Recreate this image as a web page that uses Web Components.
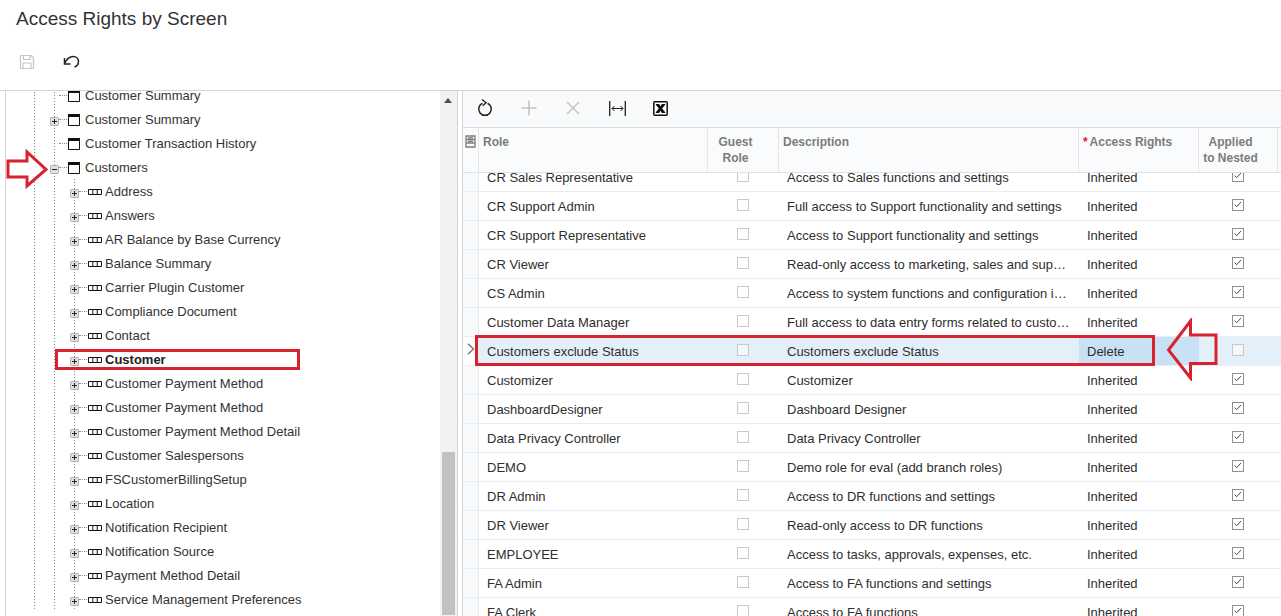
<!DOCTYPE html>
<html>
<head>
<meta charset="utf-8">
<title>Access Rights by Screen</title>
<style>
  html, body { margin: 0; height: 616px; overflow: hidden; background: #fff; }
  body { font-family: "Liberation Sans", Arial, sans-serif; color: #333; }
</style>
</head>
<body>
<access-page>
  <screen-tree slot="tree">
    <tree-node class="first" kind="screen">Customer Summary</tree-node>
    <tree-node kind="screen" toggle="plus">Customer Summary</tree-node>
    <tree-node kind="screen">Customer Transaction History</tree-node>
    <tree-node kind="screen" toggle="minus">Customers</tree-node>
    <tree-node kind="view" toggle="plus">Address</tree-node>
    <tree-node kind="view" toggle="plus">Answers</tree-node>
    <tree-node kind="view" toggle="plus">AR Balance by Base Currency</tree-node>
    <tree-node kind="view" toggle="plus">Balance Summary</tree-node>
    <tree-node kind="view" toggle="plus">Carrier Plugin Customer</tree-node>
    <tree-node kind="view" toggle="plus">Compliance Document</tree-node>
    <tree-node kind="view" toggle="plus">Contact</tree-node>
    <tree-node kind="view" toggle="plus" active>Customer</tree-node>
    <tree-node kind="view" toggle="plus">Customer Payment Method</tree-node>
    <tree-node kind="view" toggle="plus">Customer Payment Method</tree-node>
    <tree-node kind="view" toggle="plus">Customer Payment Method Detail</tree-node>
    <tree-node kind="view" toggle="plus">Customer Salespersons</tree-node>
    <tree-node kind="view" toggle="plus">FSCustomerBillingSetup</tree-node>
    <tree-node kind="view" toggle="plus">Location</tree-node>
    <tree-node kind="view" toggle="plus">Notification Recipient</tree-node>
    <tree-node kind="view" toggle="plus">Notification Source</tree-node>
    <tree-node kind="view" toggle="plus">Payment Method Detail</tree-node>
    <tree-node kind="view" toggle="plus">Service Management Preferences</tree-node>
  </screen-tree>
  <roles-grid slot="grid">
    <grid-row class="first" desc="Access to Sales functions and settings">CR Sales Representative</grid-row>
    <grid-row desc="Full access to Support functionality and settings">CR Support Admin</grid-row>
    <grid-row desc="Access to Support functionality and settings">CR Support Representative</grid-row>
    <grid-row desc="Read-only access to marketing, sales and support functions">CR Viewer</grid-row>
    <grid-row desc="Access to system functions and configuration in the CRM module">CS Admin</grid-row>
    <grid-row desc="Full access to data entry forms related to customer data">Customer Data Manager</grid-row>
    <grid-row selected rights="Delete" desc="Customers exclude Status">Customers exclude Status</grid-row>
    <grid-row desc="Customizer">Customizer</grid-row>
    <grid-row desc="Dashboard Designer">DashboardDesigner</grid-row>
    <grid-row desc="Data Privacy Controller">Data Privacy Controller</grid-row>
    <grid-row desc="Demo role for eval (add branch roles)">DEMO</grid-row>
    <grid-row desc="Access to DR functions and settings">DR Admin</grid-row>
    <grid-row desc="Read-only access to DR functions">DR Viewer</grid-row>
    <grid-row desc="Access to tasks, approvals, expenses, etc.">EMPLOYEE</grid-row>
    <grid-row desc="Access to FA functions and settings">FA Admin</grid-row>
    <grid-row desc="Access to FA functions">FA Clerk</grid-row>
  </roles-grid>
</access-page>

<script>
const RED = '#d9222f';

class AccessPage extends HTMLElement {
  constructor() {
    super();
    this.attachShadow({mode: 'open'}).innerHTML = `
      <style>
        :host { display: flex; flex-direction: column; height: 616px; position: relative; overflow: hidden; }
        h1 { margin: 0; padding: 8px 0 0 16px; height: 29px; font: 400 19px/21px "Liberation Sans", Arial, sans-serif; color: #333; }
        .bar { display: flex; align-items: center; height: 54px; box-sizing: border-box; padding: 0 0 4px 19px; gap: 27px; border-bottom: 1px solid #d4d4d4; }
        .bar svg { display: block; }
        main { flex: 1; min-height: 0; display: flex; padding-left: 5px; gap: 4px; }
        ::slotted([slot=tree]) { width: 453px; flex: none; }
        ::slotted([slot=grid]) { flex: 1; min-width: 0; }
        .arrow { position: absolute; pointer-events: none; }
      </style>
      <h1>Access Rights by Screen</h1>
      <div class="bar">
        <svg width="16" height="16" viewBox="0 0 16 16" fill="none" stroke="#c6c6c6" stroke-width="1.2">
          <path d="M1.5 2.2a.7.7 0 0 1 .7-.7h9.8l2.5 2.5v9.8a.7.7 0 0 1-.7.7H2.2a.7.7 0 0 1-.7-.7z"/>
          <path d="M4.5 1.5v4h6.5v-4M4 14.5V9h8v5.500"/>
        </svg>
        <svg width="17" height="13" viewBox="0 0 17 13" fill="none" stroke="#222" stroke-width="1.500" style="margin-left:1px">
          <path d="M1.500 8.500C4 3.500 7 1.500 10 1.500c3.500 0 5.500 2.500 5.500 5 0 2.500-1.500 4.500-4 5.500"/>
          <path d="M1.500 3v6h6"/>
        </svg>
      </div>
      <main>
        <slot name="tree"></slot>
        <slot name="grid"></slot>
      </main>
      <svg class="arrow" style="left:6px;top:149px" width="42" height="41" viewBox="0 0 42 41">
        <path d="M2 12H21V3L40 20.500 21 37V28H2Z" fill="#fff" stroke="${RED}" stroke-width="3"/>
      </svg>
      <svg class="arrow" style="left:1166px;top:318px" width="52" height="63" viewBox="0 0 52 63">
        <path d="M2.500 32 24.500 3V17H50V45.500H24.500V60Z" fill="none" stroke="${RED}" stroke-width="3"/>
      </svg>
    `;
  }
}

class ScreenTree extends HTMLElement {
  constructor() {
    super();
    this.attachShadow({mode: 'open'}).innerHTML = `
      <style>
        :host { display: block; position: relative; box-sizing: border-box; height: 525px; overflow: hidden;
                border-left: 1px solid #d4d4d4; border-right: 1px solid #d4d4d4; background: #fff; }
        .rows { margin-right: 17px; }
        .track { position: absolute; right: 0; top: 0; bottom: 0; width: 17px; background: #f1f1f1; }
        .track i { position: absolute; left: 4px; top: 7px; border: 4.500px solid transparent; border-top: 0; border-bottom: 5px solid #505050; }
        .track b { position: absolute; left: 2px; width: 13px; top: 361px; bottom: 1px; background: #c1c1c1; }
      </style>
      <div class="rows"><slot></slot></div>
      <div class="track"><i></i><b></b></div>
    `;
  }
}

const dots = (x) => `repeating-linear-gradient(to bottom, #8a8a8a 0 1px, transparent 1px 3px) ${x}px 0 / 1px 100% no-repeat`;

class TreeNode extends HTMLElement {
  constructor() {
    super();
    const deep = this.getAttribute('kind') === 'view';
    const guides = [28, 48];
    if (deep) guides.push(68);
    const toggle = this.getAttribute('toggle');
    const glyph = toggle ? `
      <svg class="toggle" width="9" height="9" viewBox="0 0 10 10">
        <rect x=".5" y=".5" width="9" height="9" rx="1" fill="#e0e0e0" stroke="#a8a8a8"/>
        <path d="M2.200 5h5.600${toggle === 'plus' ? 'M5 2.200v5.600' : ''}" stroke="#222" stroke-width="1.100"/>
      </svg>` : '';
    const icon = deep
      ? `<svg class="icon" width="14" height="6" viewBox="0 0 14 6" fill="none" stroke="#111"><path d="M.5.500h13v5H.5zM4.800.500v5M9.200.500v5"/></svg>`
      : `<svg class="icon" width="12" height="12" viewBox="0 0 12 12"><path d="M.5 1h11v10.500H.5z" fill="#fff" stroke="#111"/><path d="M0 0h12v3H0z" fill="#111"/></svg>`;
    this.attachShadow({mode: 'open'}).innerHTML = `
      <style>
        :host { display: block; height: 24px; font-size: 13px; color: #333; }
        :host(.first) { margin-top: -8px; }
        :host([active]) { font-weight: 700; color: #222; }
        .row { display: flex; align-items: center; height: 24px; box-sizing: border-box; position: relative;
               padding-left: ${deep ? 64 : 44}px; background: ${guides.map(dots).join(',')}; }
        .toggle { flex: none; background: #fff; position: relative; top: 2px; }
        .spacer { flex: none; width: 9px; }
        .link { flex: none; width: 8px; height: 0; border-top: 1px dotted #8a8a8a; margin-right: 1px; }
        .icon { flex: none; margin-right: ${deep ? 3 : 5}px; position: relative; top: 1px; }
        .label { white-space: nowrap; }
      </style>
      <div class="row">
        ${glyph || '<span class="spacer"></span>'}
        <span class="link"></span>
        ${icon}
        <span class="label"><slot></slot></span>
      </div>
    `;
    if (this.hasAttribute('active')) {
      const box = document.createElement('div');
      box.style.cssText = `position:absolute;left:49px;top:2px;width:245px;height:21px;box-sizing:border-box;border:3px solid ${RED}`;
      this.shadowRoot.querySelector('.row').append(box);
    }
  }
}

const COLS = '16px 229px 71px 300px 120px 79px 1fr';

class RolesGrid extends HTMLElement {
  constructor() {
    super();
    this.attachShadow({mode: 'open'}).innerHTML = `
      <style>
        :host { display: flex; flex-direction: column; height: 525px; box-sizing: border-box; overflow: hidden;
                border-left: 1px solid #d4d4d4; background: #fff; font-size: 13px; }
        .tools { flex: none; display: flex; align-items: center; height: 37px; box-sizing: border-box; border-bottom: 1px solid #d9dde0; background: #f9fafb; padding: 0 0 2px 14px; }
        .tools span { width: 44px; display: flex; }
        .head { flex: none; display: grid; grid-template-columns: ${COLS}; height: 45px; box-sizing: border-box;
                border-bottom: 1px solid #dde1e5; background: #fafbfc;
                font: 700 12px/16px "Liberation Sans", Arial, sans-serif; color: #7b7b7b; }
        .head div { border-right: 1px solid #e3e6e9; padding: 6px 4px 0; box-sizing: border-box; }
        .head .c { text-align: center; padding-right: 19px; }
        .head .sel { padding: 7px 0 0 2px; }
        .head .last { border: 0; }
        .req { color: ${RED}; margin-right: -1px; }
        .body { flex: 1; min-height: 0; overflow: hidden; position: relative; }
      </style>
      <div class="tools">
        <span><svg width="16" height="18" viewBox="0 0 16 18" fill="none" stroke="#222" stroke-width="1.500">
          <path d="M10.600 4.300a6.300 6.300 0 1 1-5.200 0"/><path d="M5 .500 9 3.700 5.600 6.800" stroke-width="1.400"/></svg></span>
        <span><svg width="16" height="16" viewBox="0 0 16 16" stroke="#c4c4c4" stroke-width="1.600"><path d="M8 .500v15M.500 8h15"/></svg></span>
        <span><svg width="14" height="14" viewBox="0 0 14 14" stroke="#c4c4c4" stroke-width="1.500" style="margin-left:1px"><path d="M1 1l12 12M13 1 1 13"/></svg></span>
        <span><svg width="17" height="15" viewBox="0 0 17 15" fill="none" stroke="#222"><path d="M.7 0v15M16.300 0v15" stroke-width="1.300"/><path d="M3 7.500h11M5.500 5 3 7.500 5.500 10M11.500 5 14 7.500 11.500 10"/></svg></span>
        <span><svg width="15" height="15" viewBox="0 0 15 15"><rect x=".8" y=".8" width="13.400" height="13.400" rx="1" fill="#fff" stroke="#111" stroke-width="1.500"/><path d="M2.800 3h3.400l1.300 2.300L8.800 3h3.400v.8l-3 3.700 3 3.700v.8H8.800L7.500 9.700 6.200 12H2.800v-.8l3-3.700-3-3.700z" fill="#111"/></svg></span>
      </div>
      <div class="head">
        <div class="sel"><svg width="11" height="13" viewBox="0 0 11 13" fill="none" stroke="#7c7c7c" stroke-width="1.300"><path d="M1 1h9v11H1zM1 4.500h9M1 8h9M3 6.300h5M3 2.800h5"/></svg></div>
        <div>Role</div>
        <div class="c">Guest<br>Role</div>
        <div>Description</div>
        <div><span class="req">*</span> Access Rights</div>
        <div class="c">Applied<br>to Nested</div>
        <div class="last"></div>
      </div>
      <div class="body"><slot></slot></div>
    `;
  }
}

class GridRow extends HTMLElement {
  constructor() {
    super();
    const selected = this.hasAttribute('selected');
    const desc = this.getAttribute('desc') || '';
    const rights = this.getAttribute('rights') || 'Inherited';
    const nested = !selected;
    this.attachShadow({mode: 'open'}).innerHTML = `
      <style>
        :host { display: grid; grid-template-columns: ${COLS}; height: 29px; box-sizing: border-box;
                border-bottom: 1px solid #e9eef2; font-size: 13px; line-height: 30px; color: #2e2e2e; position: relative;
                background: ${selected ? '#e4f0f9' : '#fff'}; }
        :host(.first) { margin-top: -10px; }
        .sel { background: ${selected ? '#fff' : '#f7f9fa'}; border-right: 1px solid #e6eaed; display: flex; align-items: center; justify-content: center; }
        .cell { padding: 0 8px; white-space: nowrap; overflow: hidden; text-overflow: ellipsis; min-width: 0; height: 28px; }
        .mid { display: flex; align-items: center; justify-content: center; padding: 0 1px 2px 0; }
        .cb { width: 12px; height: 12px; box-sizing: border-box; border: 1px solid #c9c9c9; background: ${selected ? '#f4f8fb' : '#fff'}; display: block; }
        .on { border-color: #8f8f8f; }
        .rights { background: ${selected ? '#c9e1f5' : 'transparent'}; }
        .box { position: absolute; left: 12px; top: -2px; width: 680px; height: 31px; box-sizing: border-box; border: 3px solid ${RED}; }
      </style>
      <div class="sel">${selected ? '<svg width="8" height="12" viewBox="0 0 8 12" fill="none" stroke="#777" stroke-width="1.400" style="position:relative;top:-2px"><path d="M1 .800 6.500 6 1 11.200"/></svg>' : ''}</div>
      <div class="cell"><slot></slot></div>
      <div class="mid"><span class="cb"></span></div>
      <div class="cell">${desc}</div>
      <div class="cell rights">${rights}</div>
      <div class="mid">${nested
        ? '<svg class="cb on" viewBox="0 0 12 12" fill="none" stroke="#444" stroke-width="1.200"><path d="M2 5.500 4.500 8 9.500 2.500"/></svg>'
        : '<span class="cb"></span>'}</div>
      <div></div>
      ${selected ? '<div class="box"></div>' : ''}
    `;
  }
}

customElements.define('access-page', AccessPage);
customElements.define('screen-tree', ScreenTree);
customElements.define('tree-node', TreeNode);
customElements.define('roles-grid', RolesGrid);
customElements.define('grid-row', GridRow);
</script>
</body>
</html>
